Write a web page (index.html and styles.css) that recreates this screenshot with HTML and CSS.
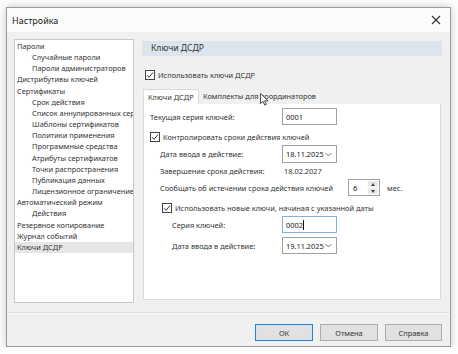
FILE: index.html
```html
<!DOCTYPE html>
<html lang="ru">
<head>
<meta charset="utf-8">
<title>Настройка</title>
<link rel="stylesheet" href="styles.css">
</head>
<body>
<div class="window">
  <div class="titlebar">
    <span class="title">Настройка</span>
    <svg class="close" width="10" height="10" viewBox="0 0 10 10"><path d="M1 1L9 9M9 1L1 9" stroke="#333" stroke-width="1.1" fill="none"/></svg>
  </div>
  <div class="main">
    <ul class="tree">
      <li>Пароли</li>
      <li class="child">Случайные пароли</li>
      <li class="child">Пароли администраторов</li>
      <li>Дистрибутивы ключей</li>
      <li>Сертификаты</li>
      <li class="child">Срок действия</li>
      <li class="child">Список аннулированных сертификатов</li>
      <li class="child">Шаблоны сертификатов</li>
      <li class="child">Политики применения</li>
      <li class="child">Программные средства</li>
      <li class="child">Атрибуты сертификатов</li>
      <li class="child">Точки распространения</li>
      <li class="child">Публикация данных</li>
      <li class="child">Лицензионное ограничение</li>
      <li>Автоматический режим</li>
      <li class="child">Действия</li>
      <li>Резервное копирование</li>
      <li>Журнал событий</li>
      <li class="selected">Ключи ДСДР</li>
    </ul>
    <div class="panel">
      <div class="band">Ключи ДСДР</div>
      <label class="check top-check"><span class="box checked"><svg width="8" height="8" viewBox="0 0 8 8"><path d="M1 4.2L3 6.3L7 1.5" stroke="#333" stroke-width="1" fill="none"/></svg></span>Использовать ключи ДСДР</label>
      <div class="tabs">
        <div class="tab active">Ключи ДСДР</div>
        <div class="tab">Комплекты для координаторов</div>
        <svg class="cursor" width="9" height="13" viewBox="0 0 9 13"><path d="M0.5 0.5L0.5 10.5L3 8.3L4.8 12.2L6.3 11.5L4.6 7.8L8 7.8Z" fill="#fff" stroke="#222" stroke-width="0.8"/></svg>
      </div>
      <div class="pane">
        <div class="row r1">
          <span class="lbl">Текущая серия ключей:</span>
          <span class="input">0001</span>
        </div>
        <label class="check cb1"><span class="box checked"><svg width="8" height="8" viewBox="0 0 8 8"><path d="M1 4.2L3 6.3L7 1.5" stroke="#333" stroke-width="1" fill="none"/></svg></span>Контролировать сроки действия ключей</label>
        <div class="row r3">
          <span class="lbl in1">Дата ввода в действие:</span>
          <span class="input combo">18.11.2025<svg width="7" height="5" viewBox="0 0 7 5"><path d="M0.5 1L3.5 4L6.5 1" stroke="#666" stroke-width="0.9" fill="none"/></svg></span>
        </div>
        <div class="row r4">
          <span class="lbl in1">Завершение срока действия:</span>
          <span class="value">18.02.2027</span>
        </div>
        <div class="row r5">
          <span class="lbl in1">Сообщать об истечении срока действия ключей</span>
          <span class="input spin">6<span class="arrows"><span class="up"></span><span class="down"></span></span></span>
          <span class="unit">мес.</span>
        </div>
        <label class="check cb2"><span class="box checked"><svg width="8" height="8" viewBox="0 0 8 8"><path d="M1 4.2L3 6.3L7 1.5" stroke="#333" stroke-width="1" fill="none"/></svg></span>Использовать новые ключи, начиная с указанной даты</label>
        <div class="row r7">
          <span class="lbl in2">Серия ключей:</span>
          <span class="input focus">0002<span class="caret"></span></span>
        </div>
        <div class="row r8">
          <span class="lbl in2">Дата ввода в действие:</span>
          <span class="input combo">19.11.2025<svg width="7" height="5" viewBox="0 0 7 5"><path d="M0.5 1L3.5 4L6.5 1" stroke="#666" stroke-width="0.9" fill="none"/></svg></span>
        </div>
      </div>
    </div>
  </div>
  <div class="footer">
    <button class="btn default">ОК</button>
    <button class="btn">Отмена</button>
    <button class="btn">Справка</button>
  </div>
</div>
</body>
</html>
```

FILE: styles.css
```css
* { box-sizing: border-box; }
html, body { margin: 0; padding: 0; background: #fdfdfd; }
body {
  font-family: "Noto Sans", "Open Sans", sans-serif;
  font-size: 7.4px;
  color: #333;
}
.window {
  margin: 7px 0 0 6px;
  width: 445px;
  height: 340px;
  background: #f0f0f0;
  border: 1px solid #9a9a9a;
  box-shadow: 0 0 8px rgba(0,0,0,0.22);
  display: flex;
  flex-direction: column;
}
.titlebar {
  height: 24px;
  background: #fbfbfb;
  display: flex;
  align-items: center;
  justify-content: space-between;
  padding: 0 9px 0 5px;
  flex: none;
}
.title { font-size: 9px; color: #222; }
.close { display: block; }
.main {
  display: flex;
  padding: 7px 8px 0 7px;
  gap: 8px;
  height: 271px;
  flex: none;
}
.tree {
  list-style: none;
  margin: 0;
  padding: 1px 0 0 0;
  width: 120px;
  height: 264px;
  background: #fff;
  border: 1px solid #c8c8c8;
  overflow: hidden;
}
.tree li {
  height: 11.17px;
  line-height: 11.17px;
  padding-left: 2px;
  white-space: nowrap;
  overflow: hidden;
}
.tree li.child { padding-left: 17px; }
.tree li.selected { background: #e6e6e6; }
.panel {
  width: 300px;
  display: flex;
  flex-direction: column;
  position: relative;
}
.band {
  margin-top: 2px;
  height: 15px;
  line-height: 15px;
  background: #dce5ee;
  padding-left: 9px;
  font-size: 8.6px;
  color: #333;
}
.check {
  display: flex;
  align-items: center;
  height: 10px;
  white-space: nowrap;
}
.box {
  width: 10px;
  height: 10px;
  border: 1px solid #444;
  background: #fff;
  margin-right: 3px;
  display: flex;
  align-items: center;
  justify-content: center;
  flex: none;
}
.box svg { display: block; }
.top-check { margin-top: 14px; margin-left: 3px; }
.tabs {
  margin-top: 9px;
  height: 15px;
  display: flex;
  margin-left: 1px;
  position: relative;
}
.tab {
  height: 15px;
  line-height: 15px;
  padding: 0 4px;
  white-space: nowrap;
}
.tab.active {
  background: #fff;
  border: 1px solid #dadada;
  border-bottom: none;
  width: 56px;
}
.cursor { position: absolute; left: 117px; top: 4px; }
.pane {
  margin-left: 1px;
  width: 298px;
  height: 196px;
  background: #fff;
  border: 1px solid #dadada;
  border-top: none;
  padding: 4px 0 0 6px;
  display: flex;
  flex-direction: column;
}
.row {
  display: grid;
  grid-template-columns: 132px auto auto;
  justify-content: start;
  align-items: center;
}
.lbl { white-space: nowrap; }
.lbl.in1 { padding-left: 10px; }
.lbl.in2 { padding-left: 22px; }
.r1 { height: 17px; }
.cb1 { margin-top: 7px; }
.r3 { margin-top: 3px; height: 18px; }
.r4 { margin-top: 3px; height: 10px; }
.r5 { margin-top: 3px; height: 17px; grid-template-columns: 198px auto auto; }
.cb2 { margin-top: 7px; margin-left: 12px; }
.r7 { margin-top: 3px; height: 17px; }
.r8 { margin-top: 4px; height: 17px; }
.input {
  width: 55px;
  height: 17px;
  border: 1px solid #a0a0a0;
  background: #fff;
  display: flex;
  align-items: center;
  padding-left: 3px;
  color: #222;
}
.r3 .input { height: 18px; }
.combo { justify-content: space-between; padding-right: 4px; }
.value { padding-left: 2px; }
.spin { width: 32px; position: relative; padding-left: 4px; }
.arrows {
  position: absolute;
  right: 1px;
  top: 1px;
  bottom: 1px;
  width: 10px;
  display: flex;
  flex-direction: column;
  gap: 1px;
}
.arrows span {
  flex: 1;
  background: #e8e8e8;
  position: relative;
}
.arrows .up::after, .arrows .down::after {
  content: "";
  position: absolute;
  left: 2.5px;
  border-left: 2.5px solid transparent;
  border-right: 2.5px solid transparent;
}
.arrows .up::after { top: 2px; border-bottom: 3px solid #444; }
.arrows .down::after { top: 2px; border-top: 3px solid #444; }
.unit { margin-left: 7px; }
.focus { border-color: #7eb4ea; }
.caret { display: inline-block; width: 1px; height: 10px; background: #111; margin-left: 0; }
.footer {
  margin-top: 9px;
  border-top: 1px solid #dcdcdc;
  box-shadow: inset 0 1px 0 #fafafa;
  padding: 11px 8px 0 0;
  display: flex;
  justify-content: flex-end;
  gap: 7px;
  flex: 1;
  align-items: flex-start;
}
.btn {
  font-family: "Noto Sans", "Open Sans", sans-serif;
  font-size: 7.4px;
  color: #333;
  width: 58px;
  height: 17px;
  background: #e1e1e1;
  border: 1px solid #adadad;
  padding: 0;
  margin: 0;
}
.btn.default { border: 1px solid #2b7fd0; box-shadow: inset 0 0 0 1px #cde3f7; }
.btn:last-child { width: 57px; }
```
